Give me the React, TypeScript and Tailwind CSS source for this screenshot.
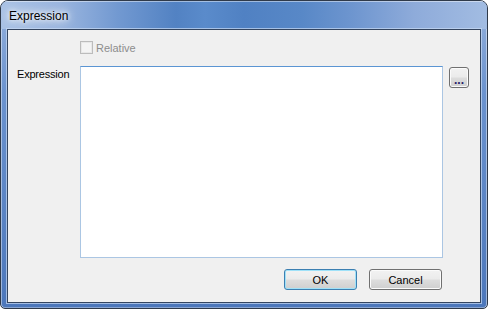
export default function App() {
  const btn =
    "h-[21px] rounded-[3px] border bg-[linear-gradient(to_bottom,#f2f2f2_0%,#ebebeb_48%,#dddddd_52%,#cfcfcf_100%)] flex items-center justify-center text-black";
  return (
    <div
      className="w-[488px] h-[309px] bg-white"
      style={{ fontFamily: '"Liberation Sans", Arial, sans-serif' }}
    >
      <div className="w-[488px] h-[309px] flex flex-col border border-[#2f3a4a] rounded-t-[8px] rounded-b-[5px] overflow-hidden bg-[linear-gradient(to_bottom,#95b1dc,#6b93cf_30%,#4c77bb)] shadow-[inset_1px_0_0_rgba(255,255,255,0.45),inset_-1px_0_0_rgba(255,255,255,0.45),inset_0_-1px_0_rgba(255,255,255,0.35)]">
        <div className="h-[28px] shrink-0 flex items-center pl-[8px] bg-[linear-gradient(to_right,#a9c2e5_0%,#9bb6df_12%,#7299d1_24%,#5282c3_36%,#5a8bcb_42%,#5081c3_50%,#5888c7_62%,#6d95cf_72%,#8eabda_85%,#a2bce2_100%)] shadow-[inset_0_1px_0_rgba(255,255,255,0.45)]">
          <span className="text-[12px] text-black leading-[14px] mt-[2px] [text-shadow:0_0_4px_#ffffff,0_0_8px_#ffffff,0_0_12px_#ffffff]">
            Expression
          </span>
        </div>
        <div className="flex-1 px-[6px] pb-[5px] flex">
          <div className="flex-1 border border-[#34455f] bg-[#f0f0f0] shadow-[0_0_0_1px_rgba(200,218,244,0.7)] flex flex-col text-[11px] leading-[14px]">
            <div className="pl-[72px] flex items-center h-[13px] mt-[11px]">
              <span className="w-[13px] h-[13px] border border-[#bcbcbc] bg-[#f4f4f4] shadow-[inset_0_0_0_1px_#e8e8e8]" />
              <span className="ml-[3px] text-[#8d8d8d]">Relative</span>
            </div>
            <div className="flex mt-[12px]">
              <div className="w-[72px] pl-[9px] pt-[1px] text-black tracking-[-0.2px]">Expression</div>
              <div className="w-[363px] h-[192px] bg-white border border-[#abc6e3] border-t-[#5b95d3]" />
              <div
                className={`${btn} ml-[6px] mt-[1px] w-[20px] border-[#707070] shadow-[inset_0_0_0_1px_#fbfbfb]`}
              >
                <span className="text-[#28206a] text-[12px] mt-[5px] font-bold">...</span>
              </div>
            </div>
            <div className="flex mt-[11px] pl-[276px] gap-[12px]">
              <div
                className={`${btn} w-[73px] border-[#3c7fb1] shadow-[inset_0_0_0_1px_#9fe1f8]`}
              >
                OK
              </div>
              <div
                className={`${btn} w-[73px] border-[#707070] shadow-[inset_0_0_0_1px_#fbfbfb]`}
              >
                Cancel
              </div>
            </div>
          </div>
        </div>
      </div>
    </div>
  );
}
